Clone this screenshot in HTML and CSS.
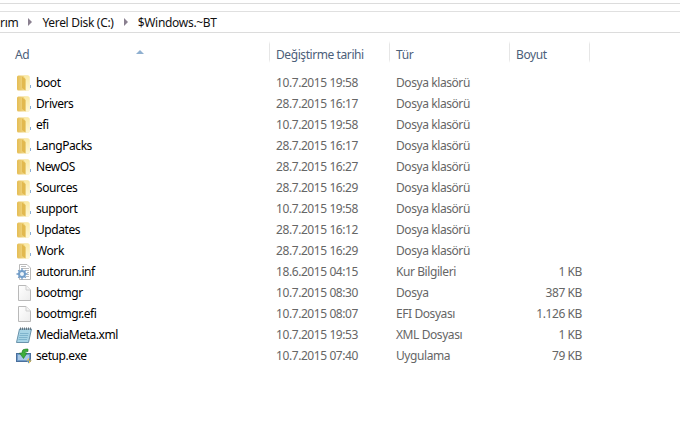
FILE: index.html
```html
<!DOCTYPE html>
<html lang="tr">
<head>
<meta charset="utf-8">
<title>$Windows.~BT</title>
<link rel="stylesheet" href="styles.css">
</head>
<body>
<svg class="defs" width="0" height="0" aria-hidden="true">
  <defs>
    <linearGradient id="foldL" x1="0" y1="0" x2="1" y2="0">
      <stop offset="0" stop-color="#e5bd55"/><stop offset="1" stop-color="#f9e9a8"/>
    </linearGradient>
    <linearGradient id="foldR" x1="0" y1="0" x2="0" y2="1">
      <stop offset="0" stop-color="#fae9a4"/><stop offset="1" stop-color="#fff8d8"/>
    </linearGradient>
    <linearGradient id="sheet" x1="0" y1="0" x2="1" y2="1">
      <stop offset="0" stop-color="#ffffff"/><stop offset="1" stop-color="#ececec"/>
    </linearGradient>
    <symbol id="folder" viewBox="0 0 16 16">
      <path d="M1 2 Q1 0.500 2.500 0.500 H12 Q13.500 0.500 13.500 2 V14 Q13.500 15.500 12 15.500 H2.500 Q1 15.500 1 14 Z" fill="url(#foldL)"/>
      <path d="M7.500 0.500 H12 Q13.500 0.500 13.500 2 V14 Q13.500 15.500 12 15.500 H9.500 V4 Z" fill="url(#foldR)"/>
      <path d="M6 1.500 L9.500 4 V15.500 L6 13 Z" fill="#e2b94f"/>
      <rect x="14" y="10" width="1" height="3" fill="#86aed8"/>
    </symbol>
    <symbol id="blank" viewBox="0 0 16 16">
      <path d="M2.500 0.500 H10 L14.500 5 V15.500 H2.500 Z" fill="url(#sheet)" stroke="#b9b9b9"/>
      <path d="M10 0.500 V5 H14.500" fill="#f4f4f4" stroke="#cfcfcf"/>
    </symbol>
    <symbol id="inf" viewBox="0 0 16 16">
      <path d="M3.500 0.500 H11 L14.500 4 V15.500 H3.500 Z" fill="#fff" stroke="#b9b9b9"/>
      <path d="M5 2.500 H10 M5 4.500 H13 M10 6.500 H13 M11 8.500 H13 M11 10.500 H13 M10 12.500 H13" stroke="#bdbdbd"/>
      <circle cx="6" cy="10" r="4" fill="#7ba4cc"/>
      <path d="M0.500 10 H11.500 M6 4.500 V15.500 M2.200 6.200 L9.800 13.800 M9.800 6.200 L2.200 13.800" stroke="#6f9ac6" stroke-width="1.300"/>
      <circle cx="6" cy="10" r="2" fill="#eef5fb"/>
    </symbol>
    <symbol id="notepad" viewBox="0 0 16 16">
      <path d="M3.500 2 H15.500 L12.500 15.500 H0.500 Z" fill="#a7d4e6" stroke="#6a93ab"/>
      <path d="M4.500 0.500 V3 M6.500 0.500 V3 M8.500 0.500 V3 M10.500 0.500 V3 M12.500 0.500 V3 M14.500 0.500 V3" stroke="#66757f"/>
      <path d="M4 6.500 H12.500 M3.500 8.500 H12 M3 10.500 H11.500 M2.500 12.500 H11" stroke="#7fb4cd"/>
    </symbol>
    <symbol id="setup" viewBox="0 0 16 16">
      <rect x="0.500" y="5.500" width="14" height="8" fill="#6f9bc9" stroke="#4a6f9c"/>
      <rect x="2" y="7" width="11" height="5" fill="#a9c8e6"/>
      <path d="M6 4 Q6 1 10 1 H12 V3.500 H10 Q9 3.500 9 5 H11 L7.500 10.500 L3.500 5 H6 Z" fill="#3fae3a" stroke="#1f7a26" stroke-width="0.600"/>
      <path d="M10.500 12.500 L13 10 L15.500 12.500 L13 15.500 Z" fill="#f2c53d"/>
      <path d="M13 10 L15.500 12.500 L13 12.500 Z" fill="#4a78c0"/>
      <path d="M10.500 12.500 L13 12.500 L13 15.500 Z" fill="#4f8fd0"/>
    </symbol>
  </defs>
</svg>
<div class="ribbon-strip"></div>
<nav class="crumbs">
  <span>rım</span>
  <span class="arrow"></span>
  <span>Yerel Disk (C:)</span>
  <span class="arrow"></span>
  <span>$Windows.~BT</span>
</nav>
<main class="list">
  <svg class="sort-icon" width="8" height="4" viewBox="0 0 8 4"><path d="M0 4 L4 0 L8 4 Z" fill="#8fb0d0"/></svg>
  <div class="head row-grid">
    <div class="hcell">Ad</div>
    <div class="hcell">Değiştirme tarihi</div>
    <div class="hcell">Tür</div>
    <div class="hcell">Boyut</div>
  </div>
  <div class="rows">
    <div class="row row-grid"><div class="name"><svg class="ico"><use href="#folder"/></svg>boot</div><div>10.7.2015 19:58</div><div>Dosya klasörü</div><div class="size"></div></div>
    <div class="row row-grid"><div class="name"><svg class="ico"><use href="#folder"/></svg>Drivers</div><div>28.7.2015 16:17</div><div>Dosya klasörü</div><div class="size"></div></div>
    <div class="row row-grid"><div class="name"><svg class="ico"><use href="#folder"/></svg>efi</div><div>10.7.2015 19:58</div><div>Dosya klasörü</div><div class="size"></div></div>
    <div class="row row-grid"><div class="name"><svg class="ico"><use href="#folder"/></svg>LangPacks</div><div>28.7.2015 16:17</div><div>Dosya klasörü</div><div class="size"></div></div>
    <div class="row row-grid"><div class="name"><svg class="ico"><use href="#folder"/></svg>NewOS</div><div>28.7.2015 16:27</div><div>Dosya klasörü</div><div class="size"></div></div>
    <div class="row row-grid"><div class="name"><svg class="ico"><use href="#folder"/></svg>Sources</div><div>28.7.2015 16:29</div><div>Dosya klasörü</div><div class="size"></div></div>
    <div class="row row-grid"><div class="name"><svg class="ico"><use href="#folder"/></svg>support</div><div>10.7.2015 19:58</div><div>Dosya klasörü</div><div class="size"></div></div>
    <div class="row row-grid"><div class="name"><svg class="ico"><use href="#folder"/></svg>Updates</div><div>28.7.2015 16:12</div><div>Dosya klasörü</div><div class="size"></div></div>
    <div class="row row-grid"><div class="name"><svg class="ico"><use href="#folder"/></svg>Work</div><div>28.7.2015 16:29</div><div>Dosya klasörü</div><div class="size"></div></div>
    <div class="row row-grid"><div class="name"><svg class="ico"><use href="#inf"/></svg>autorun.inf</div><div>18.6.2015 04:15</div><div>Kur Bilgileri</div><div class="size">1 KB</div></div>
    <div class="row row-grid"><div class="name"><svg class="ico"><use href="#blank"/></svg>bootmgr</div><div>10.7.2015 08:30</div><div>Dosya</div><div class="size">387 KB</div></div>
    <div class="row row-grid"><div class="name"><svg class="ico"><use href="#blank"/></svg>bootmgr.efi</div><div>10.7.2015 08:07</div><div>EFI Dosyası</div><div class="size">1.126 KB</div></div>
    <div class="row row-grid"><div class="name"><svg class="ico"><use href="#notepad"/></svg>MediaMeta.xml</div><div>10.7.2015 19:53</div><div>XML Dosyası</div><div class="size">1 KB</div></div>
    <div class="row row-grid"><div class="name"><svg class="ico"><use href="#setup"/></svg>setup.exe</div><div>10.7.2015 07:40</div><div>Uygulama</div><div class="size">79 KB</div></div>
  </div>
</main>
</body>
</html>
```
FILE: styles.css
```css
html, body {
  margin: 0;
  padding: 0;
  height: 100%;
  overflow: hidden;
  background: #fff;
}
body {
  font-family: "Noto Sans", "Open Sans", sans-serif;
  font-size: 12px;
  letter-spacing: -0.42px;
  color: #666;
}
.defs {
  display: block;
  height: 0;
}
.ribbon-strip {
  height: 7px;
  margin-top: 3px;
  border-top: 1px solid #dcdcdc;
  border-bottom: 1px solid #e0e0e0;
}
.crumbs {
  display: flex;
  align-items: center;
  gap: 10px;
  height: 20px;
  letter-spacing: -0.3px;
  color: #111;
  border-bottom: 1px solid #dcdcdc;
}
.arrow {
  width: 0;
  height: 0;
  border-left: 4px solid #8a8090;
  border-top: 4px solid transparent;
  border-bottom: 4px solid transparent;
}
.list {
  position: relative;
}
.sort-icon {
  position: absolute;
  left: 136px;
  top: 9px;
}
.row-grid {
  display: grid;
  grid-template-columns: 270px 120px 120px 80px;
}
.head {
  height: 22px;
  margin-top: 8px;
  color: #4c607a;
}
.hcell {
  display: flex;
  align-items: center;
  padding: 4px 0 0 6px;
  background: linear-gradient(to bottom, #fff, #e6e6e6 15%, #e6e6e6 85%, #fff) right / 1px 100% no-repeat;
}
.hcell:first-child {
  padding-left: 15px;
}
.rows {
  margin-top: 9px;
}
.row {
  height: 21px;
  line-height: 21px;
  white-space: nowrap;
}
.row > div:not(.name) {
  padding-left: 6px;
}
.name {
  display: flex;
  align-items: center;
  gap: 4px;
  padding-left: 16px;
  color: #000;
}
.ico {
  width: 16px;
  height: 16px;
  flex: none;
}
.row > .size {
  padding: 0 8px 0 0;
  text-align: right;
}
```
